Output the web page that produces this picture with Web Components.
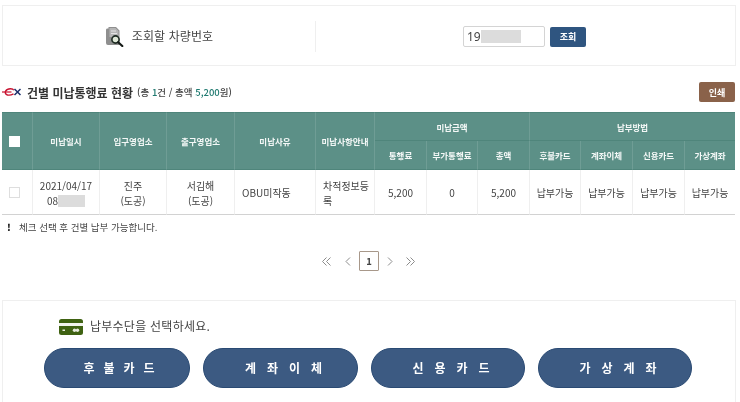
<!DOCTYPE html>
<html lang="ko">
<head>
<meta charset="utf-8">
<title>미납통행료</title>
<style>
  html, body { margin: 0; padding: 0; background: #fff; }
  body {
    width: 740px;
    height: 402px;
    overflow: hidden;
    font-family: "Noto Sans CJK KR", "Liberation Sans", sans-serif;
    color: #444;
    filter: blur(.3px);
  }
</style>
</head>
<body>
<fee-lookup></fee-lookup>
<fee-title></fee-title>
<fee-table></fee-table>
<fee-pager></fee-pager>
<pay-select>
  <pay-button style="--w:146px;--ls:9px;--in:13px">후불카드</pay-button>
  <pay-button style="--w:155px;--ls:11px;--in:17px">계좌이체</pay-button>
  <pay-button style="--w:154px;--ls:11px;--in:17px">신용카드</pay-button>
  <pay-button style="--w:154px;--ls:11px;--in:17px">가상계좌</pay-button>
</pay-select>

<script>
// 조회 영역
class FeeLookup extends HTMLElement {
  constructor() {
    super();
    const shadow = this.attachShadow({ mode: "open" });
    shadow.innerHTML = `
      <style>
        :host {
          display: flex;
          box-sizing: border-box;
          width: 734px;
          height: 61px;
          margin: 5px 0 0 2px;
          padding: 15px 0 13px;
          border: 1px solid #efefef;
        }
        .left {
          box-sizing: border-box;
          width: 313px;
          border-right: 1px solid #efefef;
          display: flex;
          align-items: center;
          justify-content: center;
          gap: 8px;
          font-size: 12px;
          letter-spacing: .1px;
          color: #444;
        }
        .left span { margin-bottom: 2px; }
        .right {
          flex: 1;
          display: flex;
          align-items: center;
          justify-content: center;
          gap: 5px;
          padding-right: 2px;
        }
        .input {
          box-sizing: border-box;
          width: 82px;
          height: 21px;
          border: 1px solid #d4d4d4;
          border-radius: 2px;
          display: flex;
          align-items: center;
          padding-left: 3px;
          font-size: 12px;
          color: #444;
          font-family: "Noto Sans", sans-serif;
        }
        .mask { width: 40px; height: 13px; background: #dcdcdc; }
        .btn {
          width: 36px;
          height: 20px;
          border-radius: 2px;
          background: #2f5580;
          color: #fff;
          font-size: 9px;
          font-weight: 700;
          display: flex;
          align-items: center;
          justify-content: center;
        }
        svg { display: block; }
      </style>
      <div class="left">
        <svg width="19" height="21" viewBox="0 0 19 21">
          <path d="M2 2.5 L3.5 2.5 L3.5 1 L11 1 L14.5 4.5 L14.5 19 L3 19 Q1 19 1 17 L1 4 Q1 2.5 2 2.5Z" fill="#8f8f8f"/>
          <path d="M4.5 2 L10.5 2 L13.5 5 L13.5 11 L4.5 11Z" fill="#b5b5b5"/>
          <path d="M6 5h5M6 7.5h6" stroke="#e4e4e4" stroke-width="1"/>
          <circle cx="10.5" cy="13.5" r="3.6" fill="#dfe8d8" stroke="#1d2b22" stroke-width="1.6"/>
          <path d="M13.2 16.2 L17.3 20" stroke="#141a16" stroke-width="2.2" stroke-linecap="round"/>
        </svg>
        <span>조회할 차량번호</span>
      </div>
      <div class="right">
        <div class="input"><span>19</span><span class="mask"></span></div>
        <div class="btn">조회</div>
      </div>
    `;
  }
}

// 타이틀 + 인쇄 버튼
class FeeTitle extends HTMLElement {
  constructor() {
    super();
    const shadow = this.attachShadow({ mode: "open" });
    shadow.innerHTML = `
      <style>
        :host {
          display: flex;
          align-items: center;
          box-sizing: border-box;
          width: 733px;
          height: 20px;
          margin: 16px 0 0 2px;
        }
        svg { display: block; margin-right: 6px; }
        h2 {
          margin: 0;
          font-size: 12px;
          font-weight: 700;
          color: #333;
        }
        small { font-size: 9.5px; color: #444; margin-left: 4px; font-weight: 500; }
        b { font-weight: 500; color: #1f7a70; }
        .print {
          margin-left: auto;
          width: 36px;
          height: 20px;
          border-radius: 2px;
          background: #8a624a;
          color: #fff;
          font-size: 9px;
          font-weight: 700;
          display: flex;
          align-items: center;
          justify-content: center;
        }
      </style>
      <svg width="19" height="8" viewBox="0 0 19 8">
        <path d="M0 4 H9.5" stroke="#c8102e" stroke-width="1.2"/>
        <path d="M11.5 5.8 Q8.5 7.6 5.5 7 Q2.6 6.2 3.6 3.2 Q5 .7 8.4 .7 Q11.2 .7 11.8 2.2" fill="none" stroke="#c8102e" stroke-width="1.4"/>
        <path d="M12.5 1 L18.5 7M18.5 1 L12.5 7" stroke="#1c2f6b" stroke-width="1.5"/>
      </svg>
      <h2>건별 미납통행료 현황</h2>
      <small>(총 <b>1</b>건 / 총액 <b>5,200</b>원)</small>
      <div class="print">인쇄</div>
    `;
  }
}

// 미납 내역 표
class FeeTable extends HTMLElement {
  constructor() {
    super();
    const shadow = this.attachShadow({ mode: "open" });
    const widths = [31, 67, 67, 68, 81, 59, 52, 51, 52, 51, 52, 52, 50];
    shadow.innerHTML = `
      <style>
        :host { display: block; margin: 10px 0 0 2px; width: 733px; }
        table {
          border-collapse: separate;
          border-spacing: 0;
          table-layout: fixed;
          width: 733px;
        }
        th {
          box-sizing: border-box;
          padding: 0;
          height: 29px;
          background: #5c9087;
          color: #f4f8f7;
          font-size: 8.5px;
          font-weight: 700;
          border-right: 1px solid #6f9d95;
          border-bottom: 1px solid #4f857b;
          text-align: center;
        }
        thead tr:first-child th { border-top: 1px solid #4f857b; }
        th:last-child { border-right: 0; }
        td {
          box-sizing: border-box;
          padding: 1px 2px 0;
          height: 45px;
          font-size: 10px;
          line-height: 15px;
          color: #444;
          text-align: center;
          border-right: 1px solid #efefef;
          border-bottom: 1px solid #d2d2d2;
        }
        td:last-child { border-right: 0; }
        td.l { text-align: left; padding-left: 7px; padding-right: 5px; }
        .hc { display: block; width: 11px; height: 11px; margin-left: 7px; background: #fff; }
        .dc { display: block; box-sizing: border-box; width: 11px; height: 11px; margin-left: 5px; border: 1px solid #dedede; background: #fff; }
        .mask { display: inline-block; width: 27px; height: 12px; background: #dcdcdc; vertical-align: -2px; }
      </style>
      <table>
        <colgroup>${widths.map(w => `<col style="width:${w}px">`).join("")}</colgroup>
        <thead>
          <tr>
            <th rowspan="2"><span class="hc"></span></th>
            <th rowspan="2">미납일시</th>
            <th rowspan="2">입구영업소</th>
            <th rowspan="2">출구영업소</th>
            <th rowspan="2">미납사유</th>
            <th rowspan="2">미납사항안내</th>
            <th colspan="3">미납금액</th>
            <th colspan="4">납부방법</th>
          </tr>
          <tr>
            <th>통행료</th><th>부가통행료</th><th>총액</th>
            <th>후불카드</th><th>계좌이체</th><th>신용카드</th><th>가상계좌</th>
          </tr>
        </thead>
        <tbody>
          <tr>
            <td><span class="dc"></span></td>
            <td>2021/04/17<br>08<span class="mask"></span></td>
            <td>진주<br>(도공)</td>
            <td>서김해<br>(도공)</td>
            <td class="l">OBU미작동</td>
            <td class="l">차적정보등록</td>
            <td>5,200</td><td>0</td><td>5,200</td>
            <td>납부가능</td><td>납부가능</td><td>납부가능</td><td>납부가능</td>
          </tr>
        </tbody>
      </table>
      <slot></slot>
    `;
  }
}

// 안내문 + 페이징
class FeePager extends HTMLElement {
  constructor() {
    super();
    const shadow = this.attachShadow({ mode: "open" });
    shadow.innerHTML = `
      <style>
        :host { display: block; margin-left: 2px; width: 733px; }
        .note {
          display: flex;
          align-items: center;
          height: 24px;
          padding-left: 5px;
          font-size: 9.5px;
          color: #444;
        }
        .note b { color: #111; width: 12px; font-weight: 900; }
        .pages {
          display: flex;
          align-items: center;
          justify-content: center;
          height: 20px;
          margin-top: 12px;
        }
        svg { display: block; fill: none; stroke: #8c8c8c; stroke-width: 1; }
        .cur {
          box-sizing: border-box;
          width: 20px;
          height: 20px;
          border: 1px solid #a8988a;
          border-radius: 1px;
          display: flex;
          align-items: center;
          justify-content: center;
          font-size: 9.5px;
          font-weight: 700;
          color: #444;
          margin: 0 8px;
        }
      </style>
      <div class="note"><b>!</b><span>체크 선택 후 건별 납부 가능합니다.</span></div>
      <div class="pages">
        <svg width="9" height="9" viewBox="0 0 9 9" style="margin-right:14px"><path d="M4.5 .5 L.5 4.5 L4.5 8.5M8.5 .5 L4.5 4.5 L8.5 8.5"/></svg>
        <svg width="6" height="9" viewBox="0 0 6 9"><path d="M5 .5 L1 4.5 L5 8.5"/></svg>
        <span class="cur">1</span>
        <svg width="6" height="9" viewBox="0 0 6 9" style="margin-right:13px"><path d="M1 .5 L5 4.5 L1 8.5"/></svg>
        <svg width="9" height="9" viewBox="0 0 9 9"><path d="M.5 .5 L4.5 4.5 L.5 8.5M4.5 .5 L8.5 4.5 L4.5 8.5"/></svg>
      </div>
    `;
  }
}

// 납부수단 선택
class PaySelect extends HTMLElement {
  constructor() {
    super();
    const shadow = this.attachShadow({ mode: "open" });
    shadow.innerHTML = `
      <style>
        :host {
          display: block;
          box-sizing: border-box;
          width: 734px;
          height: 102px;
          margin: 29px 0 0 2px;
          border: 1px solid #efefef;
          border-bottom: 0;
          padding: 17px 0 0 41px;
        }
        .head {
          display: flex;
          align-items: center;
          gap: 7px;
          height: 17px;
          margin-left: 15px;
          font-size: 12px;
          color: #444;
          letter-spacing: .25px;
        }
        .head span { margin-bottom: 3px; }
        .btns { display: flex; gap: 13px; margin-top: 13px; }
        svg { display: block; }
      </style>
      <div class="head">
        <svg width="24" height="16" viewBox="0 0 24 16">
          <rect width="24" height="16" rx="2.5" fill="#3f6212"/>
          <rect y="4" width="24" height="3" fill="#f2f4ee"/>
          <rect x="3.5" y="10.5" width="2.5" height="1.5" fill="#e8ecdf"/>
          <circle cx="15.5" cy="11.2" r="1.7" fill="#e8ecdf"/>
          <circle cx="18.5" cy="11.2" r="1.7" fill="#e8ecdf"/>
        </svg>
        <span>납부수단을 선택하세요.</span>
      </div>
      <div class="btns"><slot></slot></div>
    `;
  }
}

class PayButton extends HTMLElement {
  constructor() {
    super();
    const shadow = this.attachShadow({ mode: "open" });
    shadow.innerHTML = `
      <style>
        :host {
          display: flex;
          align-items: center;
          justify-content: center;
          box-sizing: border-box;
          width: var(--w);
          height: 40px;
          border: 1px solid #2a4a73;
          border-radius: 20px;
          background: #3c5a82;
          color: #fff;
          font-size: 12px;
          font-weight: 700;
          letter-spacing: var(--ls);
          padding-left: var(--in);
          padding-bottom: 1px;
        }
      </style>
      <slot></slot>
    `;
  }
}

customElements.define("fee-lookup", FeeLookup);
customElements.define("fee-title", FeeTitle);
customElements.define("fee-table", FeeTable);
customElements.define("fee-pager", FeePager);
customElements.define("pay-select", PaySelect);
customElements.define("pay-button", PayButton);
</script>
</body>
</html>
